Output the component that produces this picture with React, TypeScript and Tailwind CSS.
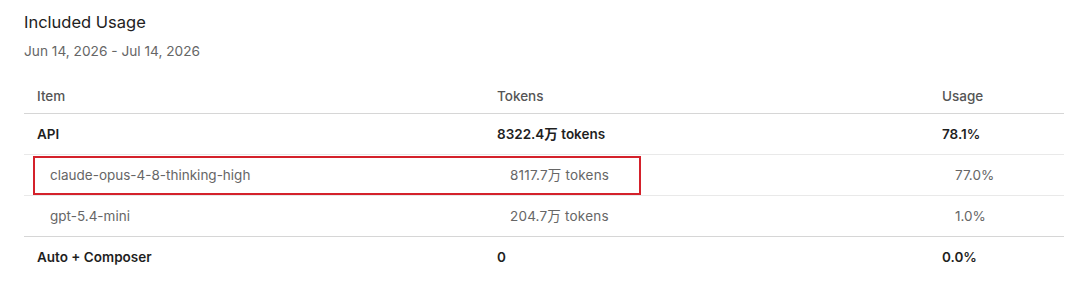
import React from "react";

type Row = {
  item: string;
  tokens: string;
  usage: string;
  sub?: boolean;
};

const ROWS: Row[] = [
  { item: "API", tokens: "8322.4万 tokens", usage: "78.1%" },
  { item: "claude-opus-4-8-thinking-high", tokens: "8117.7万 tokens", usage: "77.0%", sub: true },
  { item: "gpt-5.4-mini", tokens: "204.7万 tokens", usage: "1.0%", sub: true },
  { item: "Auto + Composer", tokens: "0", usage: "0.0%" },
];

const FONT = { fontFamily: 'Inter, "Noto Sans", "Noto Sans CJK SC", sans-serif' };

export default function App() {
  return (
    <div className="h-[293px] w-[1080px] bg-white pl-6 pt-[11px]" style={FONT}>
      <h2 className="text-[16.5px] leading-[22px] text-[#222]">Included Usage</h2>
      <p className="mt-[8px] text-[13.7px] leading-[20px] text-[#666]">Jun 14, 2026 - Jul 14, 2026</p>

      <div className="relative mt-[19px] w-[1040px]">
        <div className="grid h-[34px] grid-cols-[460px_445px_1fr] items-center border-b border-[#d6d6d6] text-[13.5px] font-medium text-[#555]">
          <div className="px-[13px]">Item</div>
          <div className="px-[13px]">Tokens</div>
          <div className="px-[13px]">Usage</div>
        </div>

        {ROWS.map((row, i) => {
          const nextSub = ROWS[i + 1]?.sub;
          const border = i === ROWS.length - 1 ? "" : nextSub ? "border-b border-[#e9e9e9]" : "border-b border-[#d6d6d6]";
          return (
            <div
              key={row.item}
              className={`grid h-[41px] grid-cols-[460px_445px_1fr] items-center text-[13.5px] ${border} ${
                row.sub ? "text-[#666]" : "font-semibold text-[#1f1f1f]"
              }`}
            >
              <div className={row.sub ? "pl-[26px]" : "pl-[13px]"}>{row.item}</div>
              <div className={row.sub ? "pl-[26px] tracking-[0.2px]" : "pl-[13px]"}>{row.tokens}</div>
              <div className={row.sub ? "pl-[26px]" : "pl-[13px]"}>{row.usage}</div>
            </div>
          );
        })}

        {/* annotation box over the claude row */}
        <div className="pointer-events-none absolute left-[9px] top-[76px] h-[39px] w-[608px] border-2 border-[#d4212b]" />
      </div>
    </div>
  );
}
